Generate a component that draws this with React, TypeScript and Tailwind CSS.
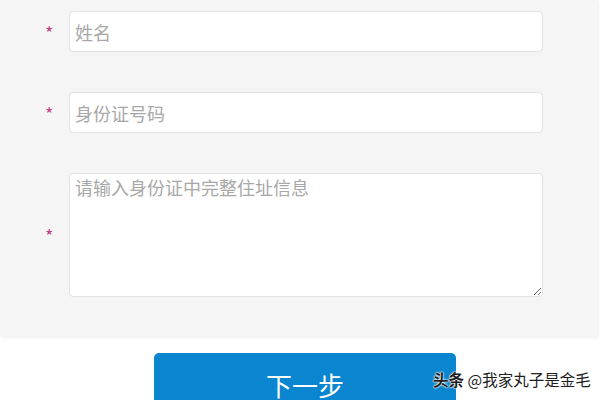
import React from "react";

const font = { fontFamily: '"Noto Sans CJK SC", "Noto Sans", sans-serif' };

function Star() {
  return (
    <div className="w-[25px] shrink-0 flex items-center">
      <span className="text-[#c2418a] text-[18px] leading-none ml-[1px] mt-[0px]">*</span>
    </div>
  );
}

export default function App() {
  return (
    <div className="relative w-[600px] h-[400px] bg-white overflow-hidden" style={font}>
      <div className="w-[598px] bg-[#f5f5f5] pt-[11px] pb-[40px] pl-[44px] shadow-[1px_1px_2px_rgba(0,0,0,0.06)] flex flex-col gap-[40px]">
        <div className="flex items-center">
          <Star />
          <input
            className="w-[474px] h-[41px] bg-white border border-[#e2e2e2] rounded-[4px] px-[5px] text-[18px] text-[#333] placeholder:text-[#a8a8a8] outline-none"
            placeholder="姓名"
          />
        </div>
        <div className="flex items-center">
          <Star />
          <input
            className="w-[474px] h-[41px] bg-white border border-[#e2e2e2] rounded-[4px] px-[5px] text-[18px] text-[#333] placeholder:text-[#a8a8a8] outline-none"
            placeholder="身份证号码"
          />
        </div>
        <div className="flex items-center">
          <Star />
          <textarea
            className="w-[474px] h-[124px] bg-white border border-[#e2e2e2] rounded-[4px] px-[5px] py-0 text-[18px] leading-[26px] text-[#333] placeholder:text-[#a8a8a8] outline-none resize-y"
            placeholder="请输入身份证中完整住址信息"
          />
        </div>
      </div>
      <div className="pl-[154px] pt-[16px]">
        <button className="w-[302px] h-[64px] bg-[#0a85cf] rounded-[5px] text-white text-[26px] leading-none flex items-center justify-center">
          下一步
        </button>
      </div>
      <div
        className="absolute left-[433px] top-[369px] text-[15.5px] leading-[20px] text-[#1e1e1e] whitespace-nowrap"
        style={{ textShadow: "0 0 2px #fff, 0 0 2px #fff, 0 0 1px #fff" }}
      >
        <span className="font-bold">头条</span> @我家丸子是金毛
      </div>
    </div>
  );
}
